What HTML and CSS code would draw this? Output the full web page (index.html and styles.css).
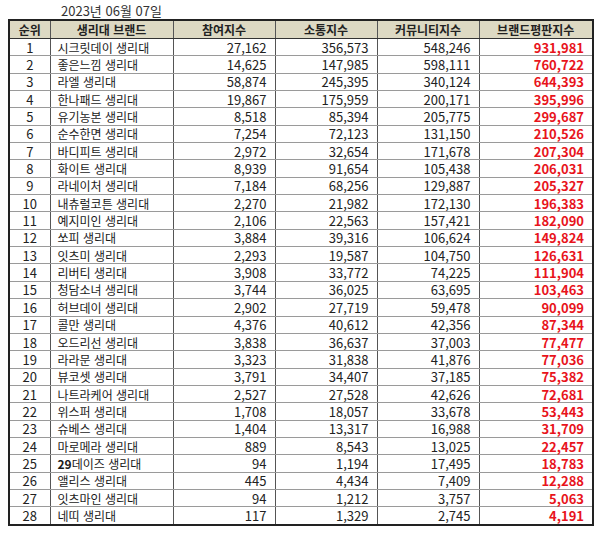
FILE: index.html
```html
<!DOCTYPE html>
<html lang="ko">
<head>
<meta charset="utf-8">
<link rel="stylesheet" href="styles.css">
</head>
<body>
<div class="title">2023년 06월 07일</div>
<table class="rank">
<colgroup><col class="c1"><col class="c2"><col class="c3"><col class="c4"><col class="c5"><col class="c6"></colgroup>
<thead>
<tr><th>순위</th><th>생리대 브랜드</th><th>참여지수</th><th>소통지수</th><th>커뮤니티지수</th><th>브랜드평판지수</th></tr>
</thead>
<tbody>
<tr><td>1</td><td>시크릿데이 생리대</td><td>27,162</td><td>356,573</td><td>548,246</td><td>931,981</td></tr>
<tr><td>2</td><td>좋은느낌 생리대</td><td>14,625</td><td>147,985</td><td>598,111</td><td>760,722</td></tr>
<tr><td>3</td><td>라엘 생리대</td><td>58,874</td><td>245,395</td><td>340,124</td><td>644,393</td></tr>
<tr><td>4</td><td>한나패드 생리대</td><td>19,867</td><td>175,959</td><td>200,171</td><td>395,996</td></tr>
<tr><td>5</td><td>유기농본 생리대</td><td>8,518</td><td>85,394</td><td>205,775</td><td>299,687</td></tr>
<tr><td>6</td><td>순수한면 생리대</td><td>7,254</td><td>72,123</td><td>131,150</td><td>210,526</td></tr>
<tr><td>7</td><td>바디피트 생리대</td><td>2,972</td><td>32,654</td><td>171,678</td><td>207,304</td></tr>
<tr><td>8</td><td>화이트 생리대</td><td>8,939</td><td>91,654</td><td>105,438</td><td>206,031</td></tr>
<tr><td>9</td><td>라네이처 생리대</td><td>7,184</td><td>68,256</td><td>129,887</td><td>205,327</td></tr>
<tr><td>10</td><td>내츄럴코튼 생리대</td><td>2,270</td><td>21,982</td><td>172,130</td><td>196,383</td></tr>
<tr><td>11</td><td>예지미인 생리대</td><td>2,106</td><td>22,563</td><td>157,421</td><td>182,090</td></tr>
<tr><td>12</td><td>쏘피 생리대</td><td>3,884</td><td>39,316</td><td>106,624</td><td>149,824</td></tr>
<tr><td>13</td><td>잇츠미 생리대</td><td>2,293</td><td>19,587</td><td>104,750</td><td>126,631</td></tr>
<tr><td>14</td><td>리버티 생리대</td><td>3,908</td><td>33,772</td><td>74,225</td><td>111,904</td></tr>
<tr><td>15</td><td>청담소녀 생리대</td><td>3,744</td><td>36,025</td><td>63,695</td><td>103,463</td></tr>
<tr><td>16</td><td>허브데이 생리대</td><td>2,902</td><td>27,719</td><td>59,478</td><td>90,099</td></tr>
<tr><td>17</td><td>콜만 생리대</td><td>4,376</td><td>40,612</td><td>42,356</td><td>87,344</td></tr>
<tr><td>18</td><td>오드리선 생리대</td><td>3,838</td><td>36,637</td><td>37,003</td><td>77,477</td></tr>
<tr><td>19</td><td>라라문 생리대</td><td>3,323</td><td>31,838</td><td>41,876</td><td>77,036</td></tr>
<tr><td>20</td><td>뷰코셋 생리대</td><td>3,791</td><td>34,407</td><td>37,185</td><td>75,382</td></tr>
<tr><td>21</td><td>나트라케어 생리대</td><td>2,527</td><td>27,528</td><td>42,626</td><td>72,681</td></tr>
<tr><td>22</td><td>위스퍼 생리대</td><td>1,708</td><td>18,057</td><td>33,678</td><td>53,443</td></tr>
<tr><td>23</td><td>슈베스 생리대</td><td>1,404</td><td>13,317</td><td>16,988</td><td>31,709</td></tr>
<tr><td>24</td><td>마로메라 생리대</td><td>889</td><td>8,543</td><td>13,025</td><td>22,457</td></tr>
<tr><td>25</td><td><b>29</b>데이즈 생리대</td><td>94</td><td>1,194</td><td>17,495</td><td>18,783</td></tr>
<tr><td>26</td><td>앨리스 생리대</td><td>445</td><td>4,434</td><td>7,409</td><td>12,288</td></tr>
<tr><td>27</td><td>잇츠마인 생리대</td><td>94</td><td>1,212</td><td>3,757</td><td>5,063</td></tr>
<tr><td>28</td><td>네띠 생리대</td><td>117</td><td>1,329</td><td>2,745</td><td>4,191</td></tr>
</tbody>
</table>
</body>
</html>
```
FILE: styles.css
```css
html, body {
  margin: 0;
  padding: 0;
  background: #ffffff;
}
body {
  font-family: "Noto Sans CJK KR", "Noto Sans", sans-serif;
  color: #222222;
}
.title {
  font-size: 13px;
  line-height: 15px;
  padding: 3px 0 0 61px;
  height: 16px;
  color: #333333;
}
.rank {
  margin-left: 8px;
  width: 584px;
  table-layout: fixed;
  border-collapse: collapse;
  border: 2px solid #222222;
  font-size: 13px;
}
.c1 { width: 41px; }
.c2 { width: 123px; }
.c3 { width: 102px; }
.c4 { width: 102px; }
.c5 { width: 102px; }
.c6 { width: 114px; }
.rank th {
  background: #ddd9c3;
  font-weight: bold;
  font-size: 12px;
  height: 17px;
  padding: 0;
  line-height: 16px;
  border: 1px solid #555555;
  border-bottom: 1px solid #333333;
  color: #222222;
}
.rank td {
  height: 16.35px;
  padding: 0 8px 0 7px;
  line-height: 15px;
  border-left: 1px solid #555555;
  border-right: 1px solid #555555;
  border-top: 1px solid #9a9a9a;
  border-bottom: 1px solid #9a9a9a;
  text-align: right;
  white-space: nowrap;
}
.rank td:nth-child(1) {
  text-align: center;
  padding: 0;
}
.rank td:nth-child(2) {
  text-align: left;
  font-size: 12px;
  color: #1a1a1a;
}
.rank td:nth-child(6) {
  color: #e8141c;
  font-weight: bold;
}
```
